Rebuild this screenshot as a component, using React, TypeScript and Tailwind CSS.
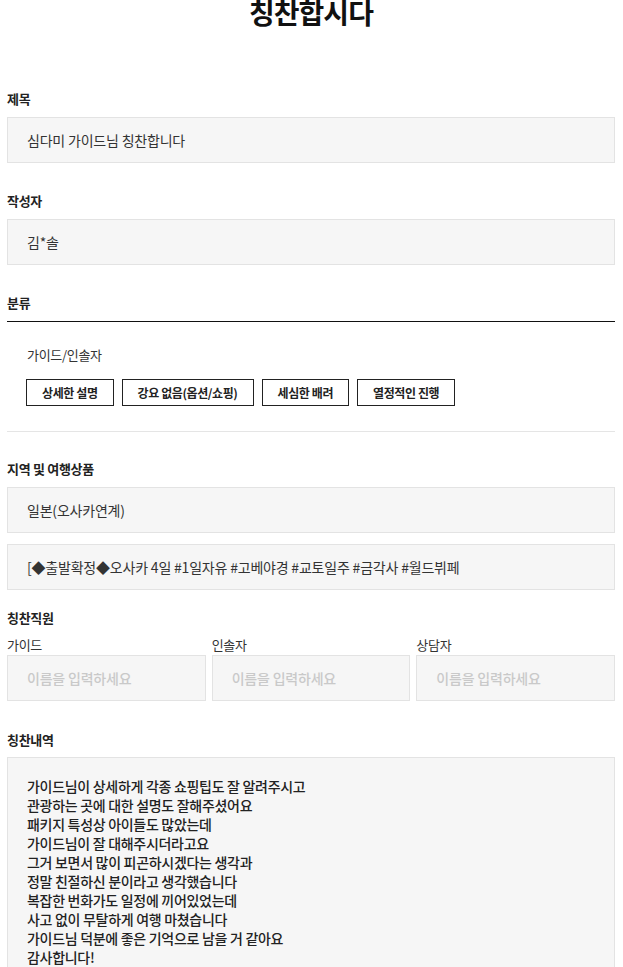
import React from "react";

const tags = ["상세한 설명", "강요 없음(옵션/쇼핑)", "세심한 배려", "열정적인 진행"];

const staffFields = ["가이드", "인솔자", "상담자"];

const praiseLines = [
  "가이드님이 상세하게 각종 쇼핑팁도 잘 알려주시고",
  "관광하는 곳에 대한 설명도 잘해주셨어요",
  "패키지 특성상 아이들도 많았는데",
  "가이드님이 잘 대해주시더라고요",
  "그거 보면서 많이 피곤하시겠다는 생각과",
  "정말 친절하신 분이라고 생각했습니다",
  "복잡한 번화가도 일정에 끼어있었는데",
  "사고 없이 무탈하게 여행 마쳤습니다",
  "가이드님 덕분에 좋은 기억으로 남을 거 같아요",
  "감사합니다!",
];

function Label({ children, className = "" }: { children: React.ReactNode; className?: string }) {
  return (
    <div className={`text-[13px] leading-[18px] font-bold text-[#222] tracking-[-0.3px] ${className}`}>
      {children}
    </div>
  );
}

function ReadBox({ children, className = "" }: { children: React.ReactNode; className?: string }) {
  return (
    <div
      className={`h-[46px] border border-[#e3e3e3] bg-[#f6f6f6] pl-[19px] flex items-center text-[14px] text-[#333] tracking-[-0.2px] ${className}`}
    >
      {children}
    </div>
  );
}

export default function App() {
  return (
    <div className="min-h-[967px] bg-white pl-[7px] pr-[8px] font-['Noto_Sans_CJK_KR','Noto_Sans',sans-serif] overflow-hidden">
      <h1 className="-mt-[3px] text-center text-[28px] leading-[30px] font-bold text-[#111] tracking-[-1px]">
        칭찬합시다
      </h1>

      {/* 제목 */}
      <Label className="mt-[63px]">제목</Label>
      <ReadBox className="mt-[9px]">심다미 가이드님 칭찬합니다</ReadBox>

      {/* 작성자 */}
      <Label className="mt-[29px]">작성자</Label>
      <ReadBox className="mt-[9px]">김*솔</ReadBox>

      {/* 분류 */}
      <Label className="mt-[29px]">분류</Label>
      <div className="mt-[9px] border-t border-[#111]">
        <div className="pt-[24px] pl-[20px] text-[13px] leading-[18px] text-[#333] tracking-[-0.3px]">
          가이드/인솔자
        </div>
        <div className="mt-[15px] ml-[19px] flex gap-[8px]">
          {tags.map((tag) => (
            <div
              key={tag}
              className="h-[27px] px-[15px] border border-[#222] flex items-center text-[12px] font-bold text-[#222] tracking-[-0.4px]"
            >
              {tag}
            </div>
          ))}
        </div>
        <div className="mt-[25px] border-t border-[#e5e5e5]" />
      </div>

      {/* 지역 및 여행상품 */}
      <Label className="mt-[28px]">지역 및 여행상품</Label>
      <ReadBox className="mt-[9px]">일본(오사카연계)</ReadBox>
      <ReadBox className="mt-[11px]">[◆출발확정◆오사카 4일 #1일자유 #고베야경 #교토일주 #금각사 #월드뷔페</ReadBox>

      {/* 칭찬직원 */}
      <Label className="mt-[19px]">칭찬직원</Label>
      <div className="mt-[9px] grid grid-cols-3 gap-x-[6px]">
        {staffFields.map((field) => (
          <div key={field}>
            <div className="text-[13px] leading-[18px] text-[#333] tracking-[-0.3px]">{field}</div>
            <div className="mt-[1px] h-[46px] border border-[#e3e3e3] bg-[#f6f6f6] pl-[19px] flex items-center text-[14px] font-medium text-[#c9c9c9] tracking-[-0.2px]">
              이름을 입력하세요
            </div>
          </div>
        ))}
      </div>

      {/* 칭찬내역 */}
      <Label className="mt-[30px]">칭찬내역</Label>
      <div className="mt-[8px] border border-[#e3e3e3] bg-[#f6f6f6] pl-[19px] pt-[19px] pb-[40px] text-[14px] leading-[19px] font-medium text-[#222] tracking-[-0.3px]">
        {praiseLines.map((line, i) => (
          <div key={i}>{line}</div>
        ))}
      </div>
    </div>
  );
}
